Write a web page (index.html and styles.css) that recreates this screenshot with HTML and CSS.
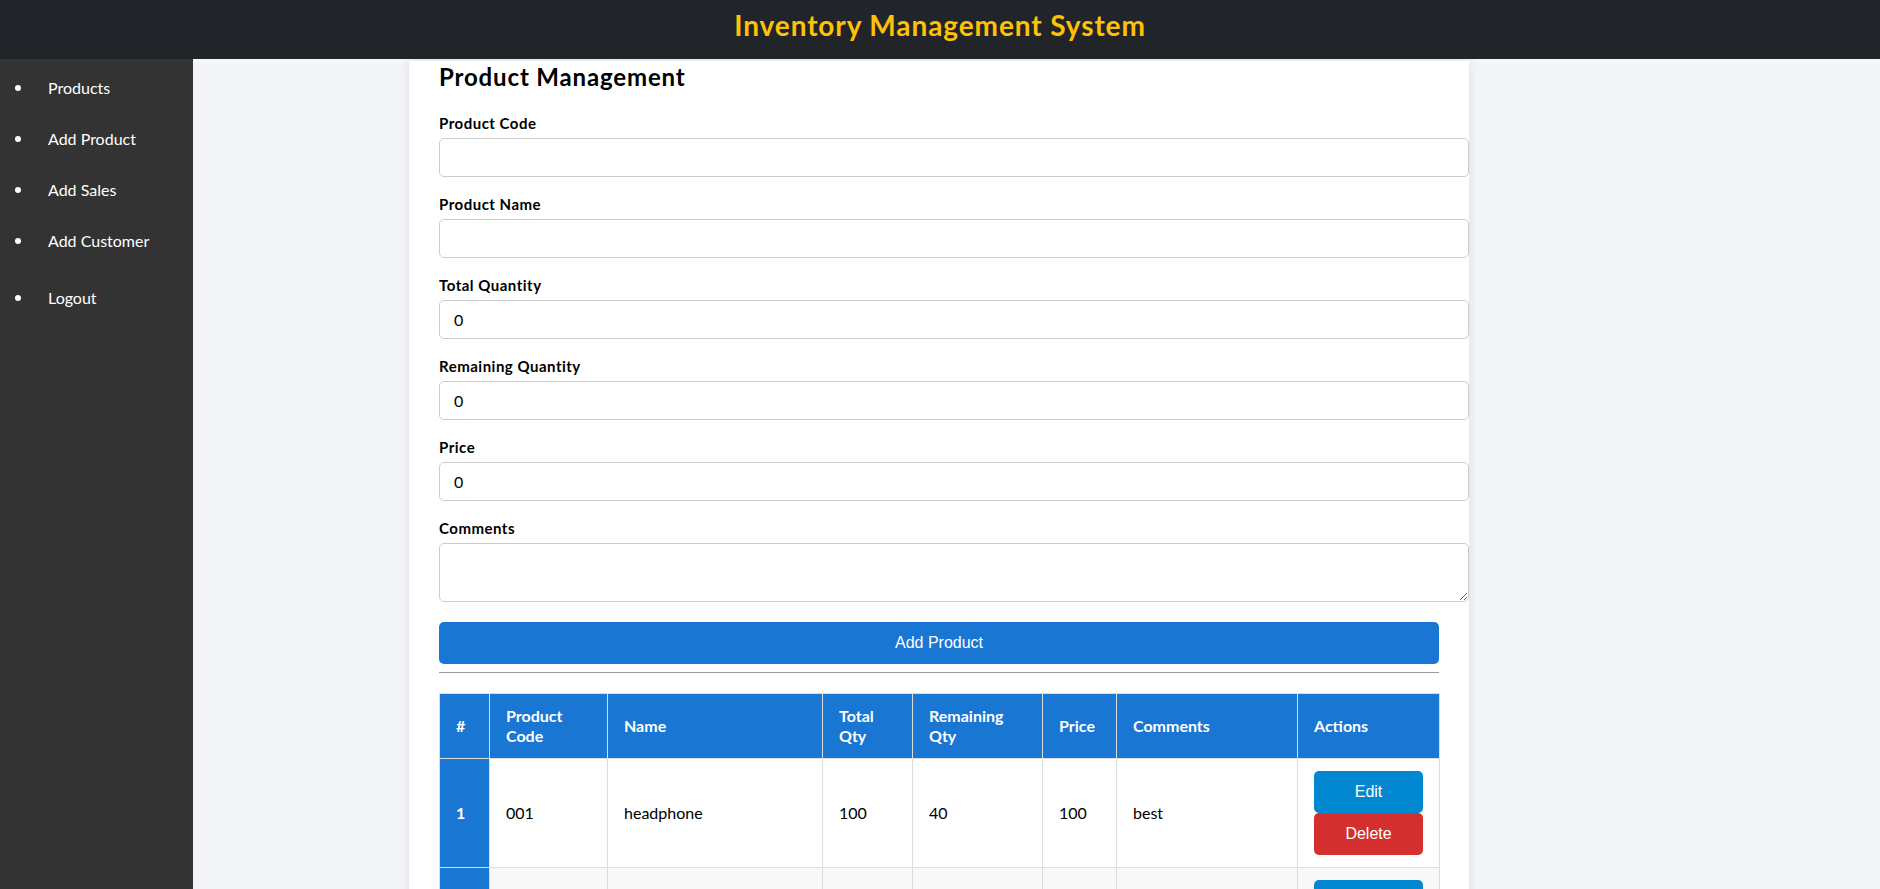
FILE: index.html
```html
<!DOCTYPE html>
<html lang="en">
<head>
<meta charset="utf-8">
<title>Inventory Management System</title>
<link rel="stylesheet" href="styles.css">
</head>
<body>
<header class="topbar">
  <h1 class="title">Inventory Management System</h1>
</header>
<div class="layout">
  <nav class="sidebar">
    <ul class="nav-list">
      <li class="nav-item"><a class="nav-link" href="#">Products</a></li>
      <li class="nav-item"><a class="nav-link" href="#">Add Product</a></li>
      <li class="nav-item"><a class="nav-link" href="#">Add Sales</a></li>
      <li class="nav-item"><a class="nav-link" href="#">Add Customer</a></li>
      <li class="nav-item logout"><a class="nav-link" href="#">Logout</a></li>
    </ul>
  </nav>
  <main class="main">
    <section class="card">
      <h2 class="card-title">Product Management</h2>
      <form class="product-form">
        <label class="field-label" for="code">Product Code</label>
        <input class="field-input" id="code" type="text">
        <label class="field-label" for="name">Product Name</label>
        <input class="field-input" id="name" type="text">
        <label class="field-label" for="total">Total Quantity</label>
        <input class="field-input" id="total" type="text" value="0">
        <label class="field-label" for="remaining">Remaining Quantity</label>
        <input class="field-input" id="remaining" type="text" value="0">
        <label class="field-label" for="price">Price</label>
        <input class="field-input" id="price" type="text" value="0">
        <label class="field-label" for="comments">Comments</label>
        <textarea class="field-input field-textarea" id="comments"></textarea>
        <button class="btn-primary" type="button">Add Product</button>
      </form>
      <hr class="divider">
      <table class="product-table">
        <thead>
          <tr>
            <th class="head-cell col-num">#</th>
            <th class="head-cell col-code">Product Code</th>
            <th class="head-cell col-name">Name</th>
            <th class="head-cell col-total">Total Qty</th>
            <th class="head-cell col-remaining">Remaining Qty</th>
            <th class="head-cell col-price">Price</th>
            <th class="head-cell col-comments">Comments</th>
            <th class="head-cell col-actions">Actions</th>
          </tr>
        </thead>
        <tbody>
          <tr class="data-row">
            <th class="head-cell row-num">1</th>
            <td class="data-cell">001</td>
            <td class="data-cell">headphone</td>
            <td class="data-cell">100</td>
            <td class="data-cell">40</td>
            <td class="data-cell">100</td>
            <td class="data-cell">best</td>
            <td class="data-cell">
              <button class="btn-edit" type="button">Edit</button>
              <button class="btn-delete" type="button">Delete</button>
            </td>
          </tr>
          <tr class="data-row">
            <th class="head-cell row-num"></th>
            <td class="data-cell"></td>
            <td class="data-cell"></td>
            <td class="data-cell"></td>
            <td class="data-cell"></td>
            <td class="data-cell"></td>
            <td class="data-cell"></td>
            <td class="data-cell">
              <button class="btn-edit" type="button" aria-label="Edit"></button>
              <button class="btn-delete" type="button" aria-label="Delete"></button>
            </td>
          </tr>
        </tbody>
      </table>
    </section>
  </main>
</div>
</body>
</html>
```
FILE: styles.css
```css
html, body {
  margin: 0;
  height: 100%;
}

body {
  font-family: Lato, "Noto Sans", sans-serif;
  color: #000;
  overflow: hidden;
}

.topbar {
  height: 59px;
  box-sizing: border-box;
  padding-top: 10.5px;
  background: #212529;
  text-align: center;
}

.title {
  margin: 0;
  font-size: 28px;
  line-height: 28px;
  font-weight: 700;
  letter-spacing: 0.9px;
  color: #ffc107;
}

.layout {
  display: grid;
  grid-template-columns: 193px 1fr;
  height: calc(100vh - 59px);
}

.sidebar {
  background: #333;
  padding-top: 3px;
}

.nav-list {
  list-style: none;
  margin: 0;
  padding: 0;
}

.nav-item {
  padding: 15px 0 15px 15px;
  font-size: 16px;
  line-height: 21px;
  color: #fff;
}

.nav-item::before {
  content: "";
  display: inline-block;
  width: 6px;
  height: 6px;
  border-radius: 50%;
  background: #fff;
  margin-right: 27px;
  vertical-align: 3px;
}

.nav-item.logout {
  margin-top: 6px;
}

.nav-link {
  color: #fff;
  text-decoration: none;
}

.main {
  background: #f4f5f9;
  overflow: hidden;
  padding-right: 195px;
}

.card {
  width: 1000px;
  margin: 0 auto;
  padding: 0 30px 30px;
  background: #fff;
  box-shadow: 0 0 10px rgba(0, 0, 0, 0.1);
}

.card-title {
  margin: 2px 0 20px;
  font-size: 24px;
  line-height: 32px;
  font-weight: 700;
  letter-spacing: 0.85px;
}

.field-label {
  display: block;
  margin-bottom: 5px;
  font-size: 15px;
  line-height: 20px;
  font-weight: 700;
  letter-spacing: 0.5px;
}

.field-input {
  display: block;
  box-sizing: border-box;
  width: calc(100% + 30px);
  height: 39px;
  margin: 0 0 17px;
  padding: 0 14px 1px;
  border: 1px solid #ccc;
  border-radius: 5px;
  background: #fff;
  font-family: Lato, "Noto Sans", sans-serif;
  font-size: 16px;
  color: #000;
}

.field-textarea {
  height: 59px;
  margin-bottom: 20px;
  padding: 8px 14px;
}

.btn-primary {
  display: block;
  width: 100%;
  height: 42px;
  border: 0;
  border-radius: 5px;
  background: #1976d2;
  color: #fff;
  font-family: "Liberation Sans", Arial, sans-serif;
  font-size: 16px;
}

.divider {
  margin: 8px 0 0;
  border: 0;
  border-top: 1px solid #9a9a9a;
  height: 0;
}

.product-table {
  width: 100%;
  margin-top: 20px;
  border-collapse: collapse;
  table-layout: fixed;
  font-size: 16px;
}

.head-cell,
.data-cell {
  box-sizing: border-box;
  border: 1px solid #ddd;
  padding: 12px 16px;
  text-align: left;
  vertical-align: middle;
  line-height: 20px;
}

.head-cell {
  background: #1976d2;
  color: #fff;
  font-weight: 700;
}

.data-cell {
  background: #fff;
  color: #000;
}

.data-row:nth-child(even) .data-cell {
  background: #f8f8f8;
}

.col-num { width: 50px; }
.col-code { width: 118px; }
.col-name { width: 215px; }
.col-total { width: 90px; }
.col-remaining { width: 130px; }
.col-price { width: 74px; }
.col-comments { width: 181px; }
.col-actions { width: 142px; }

.btn-edit,
.btn-delete {
  display: block;
  width: 100%;
  height: 42px;
  border: 0;
  border-radius: 5px;
  color: #fff;
  font-family: "Liberation Sans", Arial, sans-serif;
  font-size: 16px;
}

.btn-edit {
  background: #0288d1;
}

.btn-delete {
  background: #d32f2f;
}
```
